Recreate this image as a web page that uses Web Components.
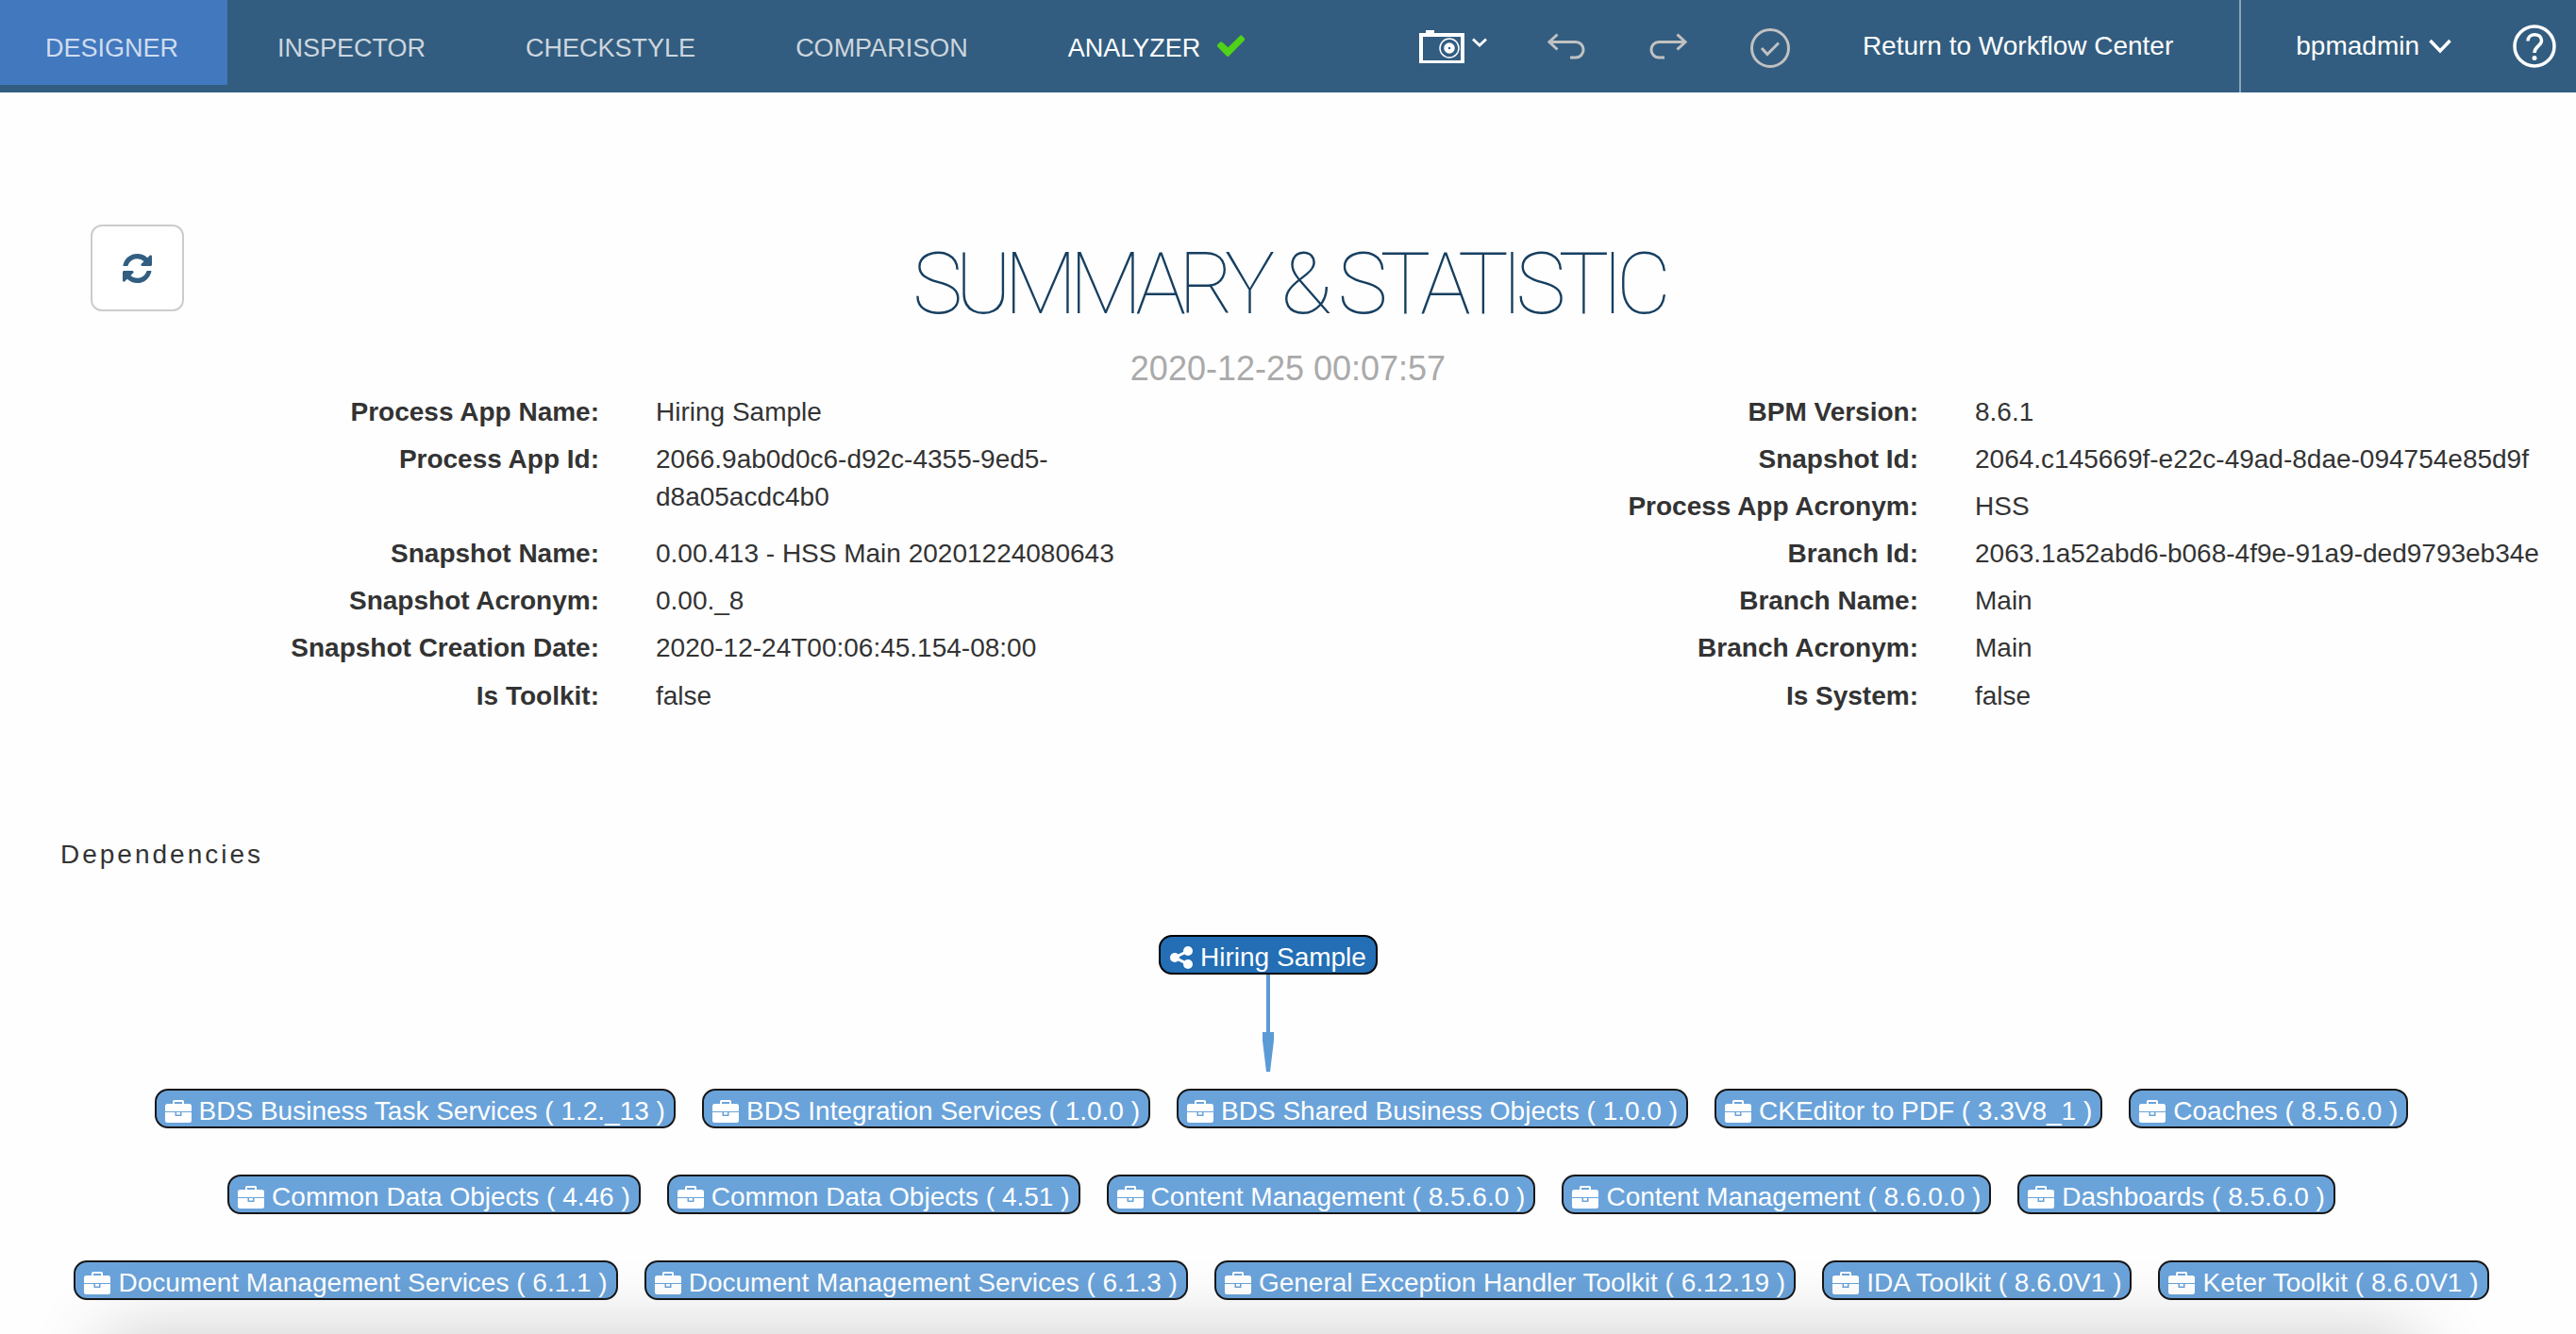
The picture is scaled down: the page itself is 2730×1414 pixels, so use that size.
<!DOCTYPE html>
<html lang="en">
<head>
<meta charset="utf-8">
<title>Summary &amp; Statistic</title>
<style>
  html { height: 100%; }
  body { margin: 0; min-height: 100%; background: #fefefe; color: #333; font-family: "Liberation Sans", Arial, sans-serif; font-size: 28px; line-height: 40px; overflow: hidden; }
</style>
</head>
<body>
<summary-page></summary-page>

<script>
const ICONS = {
  check: ['0 0 30 24', '<path fill="#4fd217" d="M0 11.500Q0 10.500 .8 9.700L3.300 7.600Q4.300 7 5.300 7.800L11.500 13.200 24.300 .8Q25.200 0 26.200 .7L29 3.800Q29.700 4.800 28.800 5.800L12.600 22.300Q11.300 23.600 10 22.600L.8 13Q0 12.300 0 11.500Z"/>'],
  camera: ['0 0 48 35', '<path fill="#fff" fill-rule="evenodd" d="M7 0h9v3h32v32H0V3h7zM4 7v25h40V7z"/><circle cx="32" cy="19" r="10" fill="none" stroke="#fff" stroke-width="1.500"/><circle cx="32" cy="19" r="3.500" fill="none" stroke="#fff" stroke-width="4.500"/>'],
  caret: ['0 0 24 16', '<path fill="none" stroke="#fff" stroke-width="3.500" d="M1.500 2L12 13 22.500 2"/>'],
  smallcaret: ['0 0 16 10', '<path fill="none" stroke="#fff" stroke-width="2.800" d="M1 1.500L8 8 15 1.500"/>'],
  undo: ['0 0 40 28', '<path fill="none" stroke="#c1c1c1" stroke-width="3" d="M10.500 1.500L2 9.500l8.500 8M2 9.500h28a8 8.200 0 0 1 0 16.500h-6"/>'],
  redo: ['0 0 40 28', '<path fill="none" stroke="#c1c1c1" stroke-width="3" d="M29.500 1.500L38 9.500l-8.500 8M38 9.500H10a8 8.200 0 0 0 0 16.500h6"/>'],
  done: ['0 0 42 42', '<g fill="none" stroke="#c1c1c1" stroke-width="3"><circle cx="21" cy="21" r="19.500"/><path d="M12 21l6 6.500 12-12"/></g>'],
  help: ['0 0 46 46', '<g fill="none" stroke="#fff" stroke-width="3.500"><circle cx="23" cy="23" r="21"/><path d="M16 17.500C16 8.500 30.500 8.500 30.500 17c0 5.500-7.500 6-7.500 13"/></g><circle cx="23" cy="35.500" r="2.500" fill="#fff"/>'],
  refresh: ['0 0 1536 1536', '<path fill="#325e81" d="M1511 928q0 5-1 7-64 268-268 434.500T764 1536q-146 0-282.500-55T238 1324l-129 129q-19 19-45 19t-45-19-19-45V960q0-26 19-45t45-19h448q26 0 45 19t19 45-19 45l-137 137q71 66 161 102t187 36q134 0 250-65t186-179q11-17 53-117 8-23 30-23h192q13 0 22.500 9.500t9.500 22.500zM1536 128v448q0 26-19 45t-45 19h-448q-26 0-45-19t-19-45 19-45l138-138Q969 256 768 256q-134 0-250 65T332 500q-11 17-53 117-8 23-30 23H50q-13 0-22.500-9.500T18 608v-7q65-268 270-434.500T768 0q146 0 284 55.500T1297 212l130-129q19-19 45-19t45 19 19 45z"/>'],
  share: ['0 0 24 24', '<g fill="#fff"><circle cx="5" cy="12" r="5"/><circle cx="19" cy="5" r="5"/><circle cx="19" cy="19" r="5"/></g><path fill="none" stroke="#fff" stroke-width="3" d="M19 5L5 12l14 7"/>'],
  briefcase: ['0 0 28 24', '<path fill="#fff" fill-rule="evenodd" d="M8 4V1.500Q8 0 9.500 0h9Q20 0 20 1.500V4h5.500Q28 4 28 6.500V12H0V6.500Q0 4 2.500 4zM10 2v2h8V2zM0 13h10.500v4h7v-4H28v8.500q0 2.500-2.500 2.500h-23Q0 24 0 21.500zM12 13h4v2.500h-4z"/>'],
  arrow: ['0 0 12 103', '<path fill="#5b9bd5" d="M4 0h4v61h4v9L8 103H4L0 70v-9h4z"/>']
};

const define = (name, render) => customElements.define(name, class extends HTMLElement {
  connectedCallback() {
    if (this.shadowRoot) return;
    this.attachShadow({ mode: 'open' }).innerHTML = render(this);
  }
});

define('ui-icon', el => {
  const [box, art] = ICONS[el.getAttribute('name')];
  return `<style>:host{display:block;flex:none}svg{display:block;width:100%;height:100%}</style>
    <svg viewBox="${box}" aria-hidden="true">${art}</svg>`;
});

define('nav-tab', el => `<style>
    :host{display:block}
    button{box-sizing:border-box;display:flex;align-items:center;gap:18px;height:90px;padding:12px 53px 0;border:0;background:none;color:#cdd6de;font:inherit;font-size:27px;cursor:pointer}
    :host([active]) button{padding:12px 52px 0 48px;background:#4178be;color:#cfdcee}
    :host([ready]) button{color:#fff}
  </style><button type="button"><slot></slot></button>`);

define('top-bar', () => `<style>
    :host{display:flex;justify-content:space-between;height:98px;background:#325d80;color:#fff}
    nav,.tools,.user,.right{display:flex}
    .tools{align-items:center}
    button{display:flex;align-items:center;padding:0;border:0;background:none;cursor:pointer;color:inherit;font:inherit}
    a{color:inherit;text-decoration:none}
    .ok{width:30px;height:24px;margin-bottom:4px}
    .snap{gap:8px;margin-right:64px}
    .snap .cam{width:48px;height:35px}
    .snap .small{width:16px;height:10px;margin-bottom:8px}
    .undo ui-icon,.redo ui-icon{width:40px;height:28px}
    .undo{margin-right:68px}.redo{margin-right:67px}
    .done ui-icon{width:42px;height:42px}
    .done{margin:4px 77px 0 0}
    .tools a{margin-right:70px}
    .user{align-items:center;border-left:2px solid #8ba4b8;padding:0 21px 0 58px}
    .name{gap:10px;margin-right:65px}
    .name ui-icon{width:24px;height:16px}
    .help ui-icon{width:46px;height:46px}
  </style>
  <nav>
    <nav-tab active>DESIGNER</nav-tab><nav-tab>INSPECTOR</nav-tab><nav-tab>CHECKSTYLE</nav-tab><nav-tab>COMPARISON</nav-tab>
    <nav-tab ready>ANALYZER<ui-icon class="ok" name="check"></ui-icon></nav-tab>
  </nav>
  <div class="right">
    <div class="tools">
      <button class="snap" type="button" aria-label="Snapshot"><ui-icon class="cam" name="camera"></ui-icon><ui-icon class="small" name="smallcaret"></ui-icon></button>
      <button class="undo" type="button" aria-label="Undo"><ui-icon name="undo"></ui-icon></button>
      <button class="redo" type="button" aria-label="Redo"><ui-icon name="redo"></ui-icon></button>
      <button class="done" type="button" aria-label="Finish"><ui-icon name="done"></ui-icon></button>
      <a href="#">Return to Workflow Center</a>
    </div>
    <div class="user">
      <button class="name" type="button">bpmadmin<ui-icon name="caret"></ui-icon></button>
      <button class="help" type="button" aria-label="Help"><ui-icon name="help"></ui-icon></button>
    </div>
  </div>`);

define('page-heading', () => `<style>
    :host{display:grid;grid-template-columns:1fr auto 1fr;align-items:start;padding:140px 96px 0}
    button{display:flex;align-items:center;justify-content:center;width:99px;height:92px;padding:0;border:2px solid #ccc;border-radius:12px;background:#fff;cursor:pointer}
    button ui-icon{width:31px;height:31px}
    .text{text-align:center}
    h1{margin:0;padding-top:14px;font:100 90px/100px Roboto,"Liberation Sans",sans-serif;letter-spacing:-8px;color:#173f60}
    p{margin:0;padding-top:19px;font-size:36px;line-height:40px;color:#aaa}
  </style>
  <button type="button" aria-label="Refresh"><ui-icon name="refresh"></ui-icon></button>
  <div class="text"><h1><slot name="title"></slot></h1><p><slot name="time"></slot></p></div>`);

const DETAILS = [
  [['Process App Name', 'Hiring Sample'], ['Process App Id', '2066.9ab0d0c6-d92c-4355-9ed5-d8a05acdc4b0'], ['Snapshot Name', '0.00.413 - HSS Main 20201224080643'], ['Snapshot Acronym', '0.00._8'], ['Snapshot Creation Date', '2020-12-24T00:06:45.154-08:00'], ['Is Toolkit', 'false']],
  [['BPM Version', '8.6.1'], ['Snapshot Id', '2064.c145669f-e22c-49ad-8dae-094754e85d9f'], ['Process App Acronym', 'HSS'], ['Branch Id', '2063.1a52abd6-b068-4f9e-91a9-ded9793eb34e'], ['Branch Name', 'Main'], ['Branch Acronym', 'Main'], ['Is System', 'false']]
];

define('detail-list', el => `<style>
    :host{display:block}
    dl{display:grid;grid-template-columns:var(--columns);align-content:start;margin:0}
    dt,dd{margin:0;padding:0 30px 10px;min-height:40px}
    dt{text-align:right;font-weight:bold}
    dd{padding-right:var(--value-end)}
    dd.tall{padding-bottom:20px}
    dt:last-of-type,dd:last-of-type{padding-top:1px}
  </style><dl>${DETAILS[el.getAttribute('group')].map(([k, v]) => `<dt>${k}:</dt><dd${k === 'Process App Id' ? ' class="tall"' : ''}>${v}</dd>`).join('')}</dl>`);

define('dependency-node', el => `<style>
    :host{display:flex;box-sizing:border-box;align-items:center;gap:8px;height:42px;padding:6px 9px 0;border:2px solid #171717;border-radius:14px;background:#6aa3da;color:#fff;white-space:nowrap}
    :host([root]){padding:6px 10px 0;border-color:#000;background:#236eb4}
    ui-icon{width:28px;height:24px}
    :host([root]) ui-icon{width:24px}
  </style><ui-icon name="${el.hasAttribute('root') ? 'share' : 'briefcase'}"></ui-icon><span><slot></slot></span>`);

const TOOLKITS = ['BDS Business Task Services ( 1.2._13 )', 'BDS Integration Services ( 1.0.0 )', 'BDS Shared Business Objects ( 1.0.0 )', 'CKEditor to PDF ( 3.3V8_1 )', 'Coaches ( 8.5.6.0 )',
  'Common Data Objects ( 4.46 )', 'Common Data Objects ( 4.51 )', 'Content Management ( 8.5.6.0 )', 'Content Management ( 8.6.0.0 )', 'Dashboards ( 8.5.6.0 )',
  'Document Management Services ( 6.1.1 )', 'Document Management Services ( 6.1.3 )', 'General Exception Handler Toolkit ( 6.12.19 )', 'IDA Toolkit ( 8.6.0V1 )', 'Keter Toolkit ( 8.6.0V1 )'];

define('dependency-graph', () => `<style>
    :host{display:block;padding-right:14px}
    h2{margin:0;padding-left:64px;font-size:28px;line-height:40px;font-weight:normal;letter-spacing:3px}
    .root{display:flex;flex-direction:column;align-items:center;padding:65px 28px 18px 0}
    .root ui-icon{width:12px;height:103px}
    .items{display:flex;flex-wrap:wrap;justify-content:center;gap:49px 28px}
  </style>
  <h2>Dependencies</h2>
  <div class="root"><dependency-node root>Hiring Sample</dependency-node><ui-icon name="arrow"></ui-icon></div>
  <div class="items">${TOOLKITS.map(t => `<dependency-node>${t}</dependency-node>`).join('')}</div>`);

define('summary-page', () => `<style>
    :host{display:block}
    .details{display:grid;grid-template-columns:1fr 1fr;margin-top:6px}
    .left{--columns:665fr 700fr;--value-end:120px}
    .right{--columns:698fr 667fr;--value-end:20px}
    dependency-graph{margin-top:118px}
    .edge{position:fixed;bottom:-100px;left:110px;right:170px;height:100px;box-shadow:0 0 80px rgba(0,0,0,.2);pointer-events:none}
  </style>
  <top-bar></top-bar>
  <main>
    <page-heading><span slot="title">SUMMARY &amp; STATISTIC</span><span slot="time">2020-12-25 00:07:57</span></page-heading>
    <div class="details"><detail-list class="left" group="0"></detail-list><detail-list class="right" group="1"></detail-list></div>
    <dependency-graph></dependency-graph>
  </main>
  <div class="edge"></div>`);
</script>
</body>
</html>
